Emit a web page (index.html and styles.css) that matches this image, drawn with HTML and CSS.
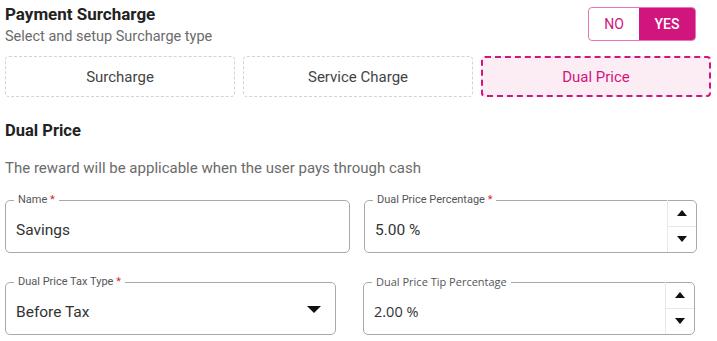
FILE: index.html
```html
<!DOCTYPE html>
<html lang="en">
<head>
    <meta charset="UTF-8">
    <meta name="viewport" content="width=device-width, initial-scale=1.0">
    <title>Payment Surcharge</title>
    <link rel="stylesheet" href="styles.css">
</head>
<body>
    <div class="head">
        <div>
            <h1>Payment Surcharge</h1>
            <p class="sub">Select and setup Surcharge type</p>
        </div>
        <div class="toggle">
            <span class="opt">NO</span>
            <span class="opt on">YES</span>
        </div>
    </div>

    <div class="tabs">
        <div class="tab">Surcharge</div>
        <div class="tab">Service Charge</div>
        <div class="tab active">Dual Price</div>
    </div>

    <h2>Dual Price</h2>
    <p class="desc">The reward will be applicable when the user pays through cash</p>

    <div class="row first">
        <fieldset class="field w-name">
            <legend>Name <b>*</b></legend>
            <div class="value">Savings</div>
        </fieldset>
        <fieldset class="field w-pct spin">
            <legend>Dual Price Percentage <b>*</b></legend>
            <div class="value">5.00 %</div>
            <div class="arrows">
                <span class="up"></span>
                <span class="down"></span>
            </div>
        </fieldset>
    </div>

    <div class="row second">
        <fieldset class="field w-tax">
            <legend>Dual Price Tax Type <b>*</b></legend>
            <div class="value">Before Tax</div>
            <span class="caret"></span>
        </fieldset>
        <fieldset class="field w-tip spin alt">
            <legend>Dual Price Tip Percentage</legend>
            <div class="value">2.00 %</div>
            <div class="arrows">
                <span class="up"></span>
                <span class="down"></span>
            </div>
        </fieldset>
    </div>
</body>
</html>
```

FILE: styles.css
```css
body { margin: 0; padding: 4px 6px 0 5px; width: 706px; font-family: Roboto, "Liberation Sans", sans-serif; color: #222; background: #fff; }

.head { display: flex; justify-content: space-between; align-items: flex-start; }
h1 { margin: 0; font-size: 17px; font-weight: bold; line-height: 20px; color: #222; }
.sub { margin: 4px 0 0; font-size: 14.5px; line-height: 18px; color: #6b6b6b; }

.toggle { display: flex; margin: 3px 15px 0 0; border: 1px solid #e477b4; border-radius: 4px; overflow: hidden; }
.opt { width: 50px; height: 32px; display: flex; align-items: center; justify-content: center; font-size: 14px; color: #d0157f; }
.opt.on { width: 56px; background: #d0157f; color: #fff; font-weight: 500; }

.tabs { display: grid; grid-template-columns: repeat(3, 1fr); gap: 8px; margin-top: 10px; }
.tab { height: 39px; display: flex; align-items: center; justify-content: center; border: 1px dashed #cfd4dc; border-radius: 4px; font-size: 15px; color: #444; }
.tab.active { height: 37px; border: 2px dashed #d0157f; background: #fcedf5; color: #d0157f; }

h2 { margin: 24px 0 0; font-size: 16.5px; font-weight: bold; line-height: 20px; color: #222; }
.desc { margin: 17px 0 0; font-size: 15px; line-height: 20px; color: #6b6b6b; }

.row { display: flex; }
.row.first { margin-top: 16px; gap: 14px; }
.row.second { margin-top: 23px; gap: 27px; }

.field { position: relative; margin: 0; padding: 0 10px; height: 57px; border: 1px solid #a9a9a9; border-radius: 5px; box-sizing: content-box; }
.field legend { padding: 0 4px; margin-left: -2px; font-size: 11px; line-height: 12px; color: #555; }
.field legend b { color: #e02424; font-weight: normal; }
.value { padding-top: 14px; font-size: 15.5px; line-height: 20px; color: #333; }

.w-name { width: 323px; }
.w-pct { width: 311px; }
.w-tax { width: 309px; }
.w-tip { width: 310px; }

.alt legend, .alt .value { font-family: "Open Sans", sans-serif; }
.alt .value { font-size: 14.5px; }

.arrows { position: absolute; top: -6px; right: 0; bottom: 0; width: 28px; border-left: 1px solid #e8e8e8; display: flex; flex-direction: column; }
.arrows span { flex: 1; display: flex; align-items: center; justify-content: center; }
.arrows .up { border-bottom: 1px solid #e8e8e8; }
.arrows .up::after { content: ""; border: 5px solid transparent; border-top: 0; border-bottom: 6px solid #111; }
.arrows .down::after { content: ""; border: 5px solid transparent; border-bottom: 0; border-top: 6px solid #111; }

.caret { position: absolute; right: 14px; top: 18px; border: 7px solid transparent; border-bottom: 0; border-top: 7px solid #111; }
```
